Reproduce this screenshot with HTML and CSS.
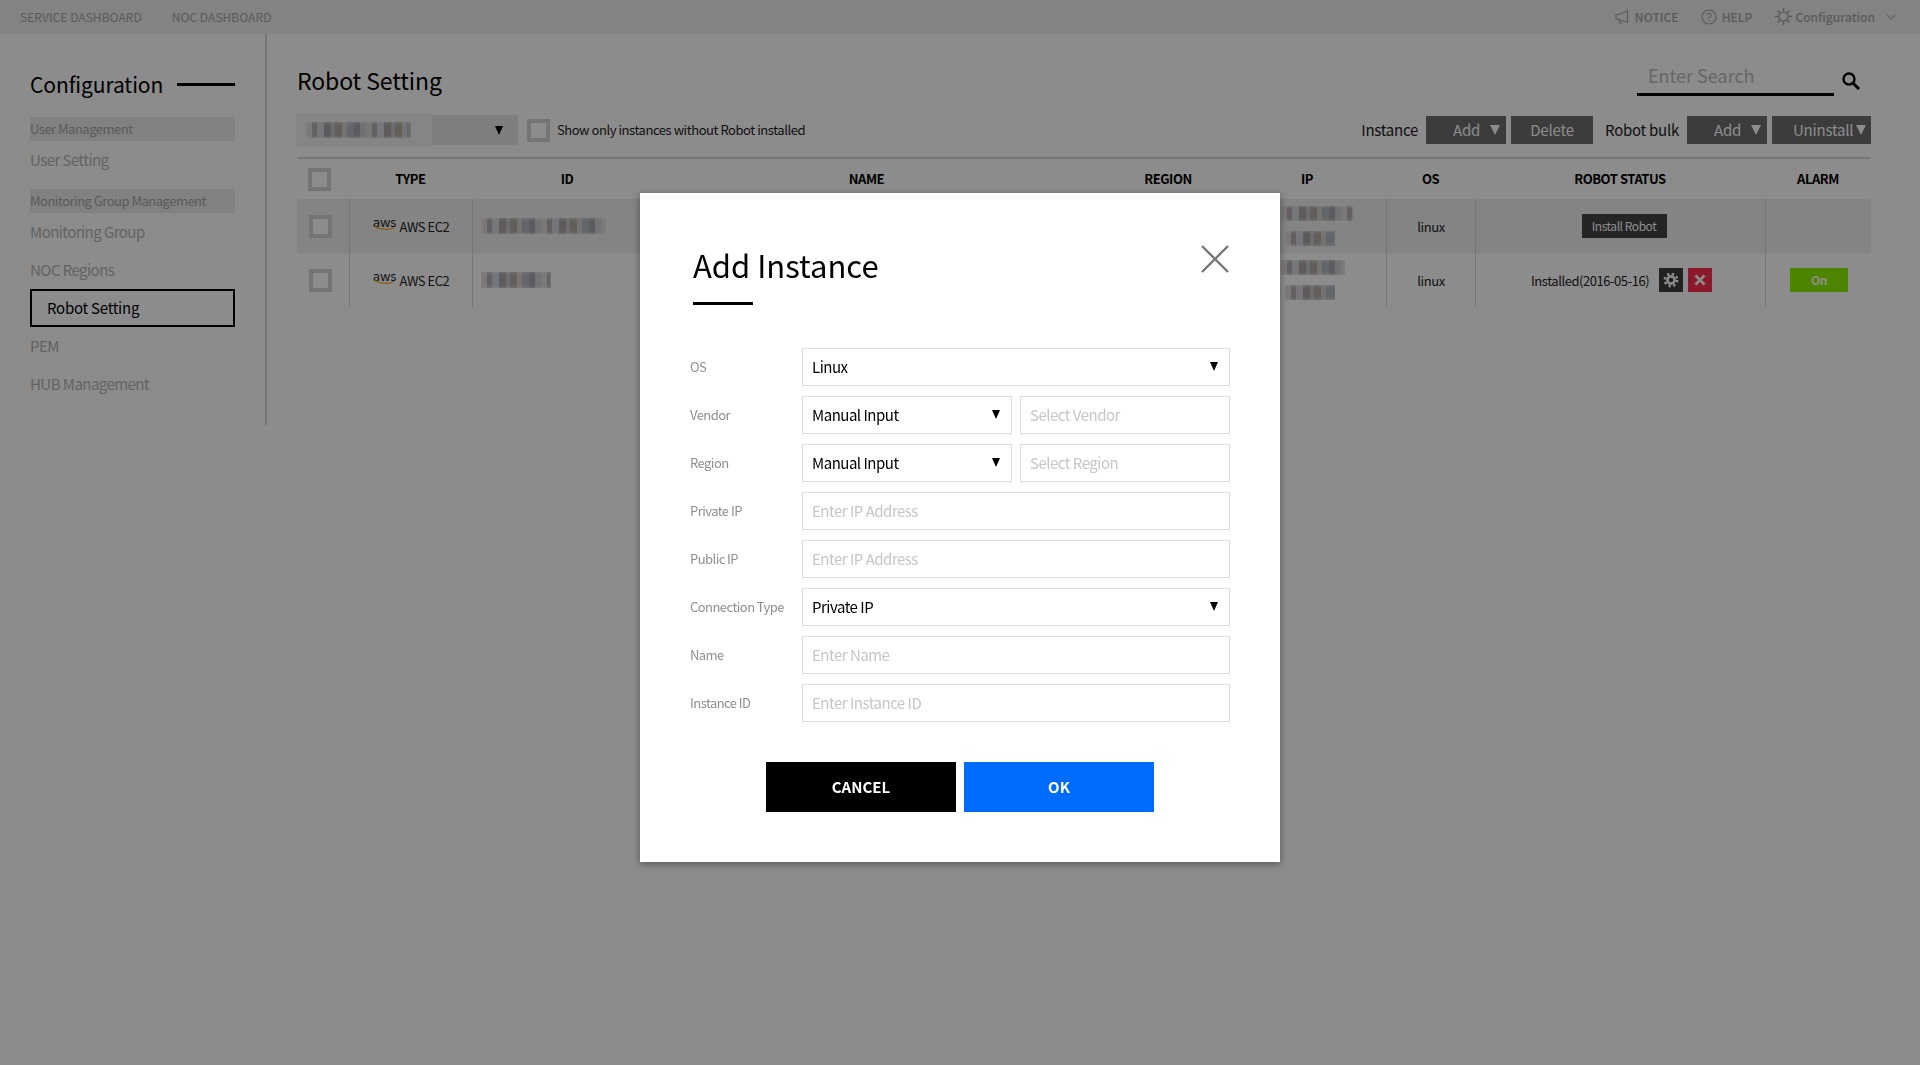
FILE: index.html
```html
<!DOCTYPE html>
<html lang="en">
<head>
  <meta charset="UTF-8" />
  <title>Robot Setting</title>
  <link rel="stylesheet" href="styles.css">
</head>
<body>
  <header class="topbar">
    <nav class="topbar-left">
      <a>SERVICE DASHBOARD</a>
      <a>NOC DASHBOARD</a>
    </nav>
    <div class="topbar-right">
      <svg class="icon-notice" width="14" height="14" viewBox="0 0 14 14" fill="none" stroke="#a5a5a5" stroke-width="1.2"><path d="M12.5 1L3.5 4.5H1V8.5L4 9.5V9.5L12.5 12.5Z"/><path d="M4 9.5L5 13H7.5"/></svg>
      <a class="link-notice">NOTICE</a>
      <svg class="icon-help" width="16" height="16" viewBox="0 0 16 16" fill="none" stroke="#a5a5a5" stroke-width="1.1"><circle cx="8" cy="8" r="7"/><path d="M5.8 6.2C5.8 3.6 10.2 3.6 10.2 6.2C10.2 7.8 8 7.8 8 9.6"/><path d="M8 11V12.2"/></svg>
      <a class="link-help">HELP</a>
      <svg class="icon-config" width="17" height="17" viewBox="0 0 17 17" fill="none" stroke="#a5a5a5" stroke-width="1.5"><circle cx="8.5" cy="8.5" r="4.5"/><path d="M8.5 0V3M8.5 14V17M0 8.5H3M14 8.5H17M2.5 2.5L4.6 4.6M12.4 12.4L14.5 14.5M2.5 14.5L4.6 12.4M12.4 4.6L14.5 2.5"/></svg>
      <a class="link-config">Configuration</a>
      <svg class="icon-chevron" width="10" height="6" viewBox="0 0 10 6" fill="none" stroke="#b5b5b5" stroke-width="1.2"><path d="M1 1L5 5L9 1"/></svg>
    </div>
  </header>

  <div class="main">
    <aside class="sidebar">
      <div class="sidebar-title">
        <h2>Configuration</h2>
        <span class="sidebar-rule"></span>
      </div>
      <div class="group-label">User Management</div>
      <a class="side-link">User Setting</a>
      <div class="group-label group-label-next">Monitoring Group Management</div>
      <a class="side-link">Monitoring Group</a>
      <a class="side-link">NOC Regions</a>
      <a class="side-link side-link-active">Robot Setting</a>
      <a class="side-link">PEM</a>
      <a class="side-link">HUB Management</a>
    </aside>

    <section class="content">
      <div class="title-row">
        <h1>Robot Setting</h1>
        <div class="search">
          <span class="search-box">Enter Search</span>
          <svg class="search-icon" width="18" height="18" viewBox="0 0 18 18" fill="none" stroke="#000"><circle cx="7" cy="7" r="5.5" stroke-width="2.4"/><path d="M11 11L17 17" stroke-width="3"/></svg>
        </div>
      </div>

      <div class="toolbar">
        <div class="dropdown">
          <span class="dropdown-patch"><span class="mosaic mosaic-account"></span></span>
          <span class="arrow arrow-dark"></span>
        </div>
        <span class="checkbox toolbar-check"></span>
        <span class="toolbar-label">Show only instances without Robot installed</span>
        <div class="toolbar-actions">
          <span class="action-label">Instance</span>
          <button class="btn btn-add">Add<span class="arrow"></span></button>
          <button class="btn btn-delete">Delete</button>
          <span class="action-label action-label-next">Robot bulk</span>
          <button class="btn btn-add">Add<span class="arrow"></span></button>
          <button class="btn btn-uninstall">Uninstall<span class="arrow"></span></button>
        </div>
      </div>

      <div class="table">
        <div class="tr tr-head">
          <div class="th"><span class="checkbox"></span></div>
          <div class="th">TYPE</div>
          <div class="th">ID</div>
          <div class="th">NAME</div>
          <div class="th">REGION</div>
          <div class="th th-ip">IP</div>
          <div class="th">OS</div>
          <div class="th">ROBOT STATUS</div>
          <div class="th">ALARM</div>
        </div>

        <div class="tr tr-odd">
          <div class="td"><span class="checkbox"></span></div>
          <div class="td"><span class="aws">aws<svg width="22" height="5" viewBox="0 0 22 5" fill="none" stroke="#ff9d1e" stroke-width="1.3"><path d="M1 0.5C6 4 15 4.5 20 1.5"/></svg></span>AWS EC2</div>
          <div class="td td-left"><span class="mosaic mosaic-id"></span></div>
          <div class="td"></div>
          <div class="td"></div>
          <div class="td td-ip"><span class="mosaic mosaic-ip"></span><span class="mosaic mosaic-ip-sub"></span></div>
          <div class="td">linux</div>
          <div class="td"><button class="btn-install">Install Robot</button></div>
          <div class="td"></div>
        </div>

        <div class="tr">
          <div class="td"><span class="checkbox"></span></div>
          <div class="td"><span class="aws">aws<svg width="22" height="5" viewBox="0 0 22 5" fill="none" stroke="#ff9d1e" stroke-width="1.3"><path d="M1 0.5C6 4 15 4.5 20 1.5"/></svg></span>AWS EC2</div>
          <div class="td td-left"><span class="mosaic mosaic-id-short"></span></div>
          <div class="td"></div>
          <div class="td"></div>
          <div class="td td-ip"><span class="mosaic mosaic-ip mosaic-ip-short"></span><span class="mosaic mosaic-ip-sub"></span></div>
          <div class="td">linux</div>
          <div class="td td-status">
            <span>Installed(2016-05-16)</span>
            <button class="btn-square btn-gear"><svg width="16" height="16" viewBox="0 0 16 16" fill="none" stroke="#fff"><circle cx="8" cy="8" r="3.6" stroke-width="2.6"/><circle cx="8" cy="8" r="6.2" stroke-width="2.4" stroke-dasharray="2.4 2.47"/></svg></button>
            <button class="btn-square btn-remove"><svg width="12" height="12" viewBox="0 0 12 12" fill="none" stroke="#fff" stroke-width="2.6"><path d="M1.5 1.5L10.5 10.5M10.5 1.5L1.5 10.5"/></svg></button>
          </div>
          <div class="td"><button class="btn-on">On</button></div>
        </div>
      </div>
    </section>
  </div>

  <div class="overlay">
    <div class="modal">
      <div class="modal-head">
        <h2>Add Instance</h2>
        <svg class="modal-close" width="28" height="28" viewBox="0 0 28 28" fill="none" stroke="#777" stroke-width="2.4"><path d="M1 1L27 27M27 1L1 27"/></svg>
      </div>
      <form class="modal-form">
        <label>OS</label>
        <div class="select"><select><option>Linux</option></select></div>

        <label>Vendor</label>
        <div class="field-pair">
          <div class="select"><select><option>Manual Input</option></select></div>
          <input type="text" placeholder="Select Vendor" />
        </div>

        <label>Region</label>
        <div class="field-pair">
          <div class="select"><select><option>Manual Input</option></select></div>
          <input type="text" placeholder="Select Region" />
        </div>

        <label>Private IP</label>
        <input type="text" placeholder="Enter IP Address" />

        <label>Public IP</label>
        <input type="text" placeholder="Enter IP Address" />

        <label>Connection Type</label>
        <div class="select"><select><option>Private IP</option></select></div>

        <label>Name</label>
        <input type="text" placeholder="Enter Name" />

        <label>Instance ID</label>
        <input type="text" placeholder="Enter Instance ID" />
      </form>
      <div class="modal-buttons">
        <button class="btn-cancel">CANCEL</button>
        <button class="btn-ok">OK</button>
      </div>
    </div>
  </div>
</body>
</html>
```

FILE: styles.css
```css
* {
  box-sizing: border-box;
}

body {
  margin: 0;
  height: 1065px;
  overflow: hidden;
  background-color: #fff;
  color: #1c1c1c;
  font-family: "Noto Sans CJK KR", "Noto Sans", sans-serif;
  font-size: 13px;
  letter-spacing: -0.45px;
}

h1, h2 {
  margin: 0;
  font-weight: 400;
}

button {
  border: none;
  padding: 0;
  font-family: inherit;
  letter-spacing: inherit;
  color: #fff;
}

/* top bar */
.topbar {
  height: 34px;
  padding-bottom: 1px;
  background-color: #eee;
  display: flex;
  align-items: center;
  justify-content: space-between;
  font-size: 12px;
  color: #a5a5a5;
  letter-spacing: 0.05px;
}

.topbar-left {
  padding-left: 20px;
  display: flex;
  gap: 30px;
}

.topbar-right {
  display: flex;
  align-items: center;
  padding-right: 24px;
  font-weight: 500;
}

.icon-notice {
  margin-right: 6px;
}

.link-notice {
  margin-right: 22px;
}

.icon-help {
  margin-right: 5px;
}

.link-help {
  margin-right: 23px;
}

.icon-config {
  margin-right: 3px;
}

.link-config {
  margin-right: 11px;
}

/* sidebar */
.main {
  display: flex;
}

.sidebar {
  width: 267px;
  height: 391px;
  padding: 34px 30px 0;
  border-right: 2px solid #d6d6d6;
  color: #b4b4b4;
  font-size: 15px;
  letter-spacing: -0.55px;
}

.sidebar-title {
  display: flex;
  align-items: center;
  justify-content: space-between;
  height: 34px;
  margin-bottom: 15px;
}

.sidebar-title h2 {
  font-size: 21px;
  line-height: 32px;
  margin-top: -2px;
  color: #000;
  letter-spacing: -0.1px;
}

.sidebar-rule {
  width: 58px;
  height: 3px;
  margin-top: -2px;
  background-color: #000;
}

.group-label {
  height: 24px;
  line-height: 24px;
  font-size: 13px;
  color: #a6a6a6;
  background-color: #ebebeb;
  margin-bottom: 1px;
  letter-spacing: -0.5px;
}

.group-label-next {
  margin-top: 9px;
}

.side-link {
  display: block;
  height: 38px;
  line-height: 36px;
}

.side-link-active {
  margin: -1px 0 1px;
  padding-left: 15px;
  line-height: 33px;
  border: 2px solid #000;
  color: #000;
  letter-spacing: -0.25px;
}

/* content */
.content {
  width: 1653px;
  padding: 30px 49px 0 30px;
}

.title-row {
  display: flex;
  justify-content: space-between;
  height: 34px;
  margin-bottom: 17px;
}

.title-row h1 {
  font-size: 23px;
  line-height: 32px;
  color: #000;
  letter-spacing: -0.1px;
}

.search {
  display: flex;
  align-items: flex-start;
}

.search-box {
  width: 197px;
  height: 32px;
  padding-left: 11px;
  line-height: 22px;
  font-size: 18px;
  color: #bbb;
  border-bottom: 3px solid #000;
  letter-spacing: 0;
}

.search-icon {
  margin: 8px 11px 0 8px;
}

.toolbar {
  display: flex;
  align-items: center;
  height: 30px;
  margin-left: -1px;
  margin-bottom: 12px;
}

.dropdown {
  width: 222px;
  height: 30px;
  background-color: #e7e7e7;
  display: flex;
  align-items: center;
}

.dropdown-patch {
  display: flex;
  align-items: center;
  width: 136px;
  height: 34px;
  margin: -2px 0;
  padding-left: 10px;
  background-color: #f2f2f2;
}

.dropdown .arrow {
  margin-left: 63px;
}

.checkbox {
  display: block;
  width: 23px;
  height: 23px;
  border: 4px solid #d4d4d4;
  background-color: #fff;
}

.toolbar-check {
  margin-left: 9px;
}

.toolbar-label {
  margin-left: 7px;
  padding-bottom: 2px;
  color: #1c1c1c;
}

.toolbar-actions {
  margin-left: auto;
  display: flex;
  align-items: center;
}

.action-label {
  font-size: 15px;
  margin-right: 8px;
  padding-bottom: 2px;
  letter-spacing: -0.25px;
}

.action-label-next {
  margin-left: 12px;
  margin-right: 8px;
}

.btn {
  height: 28px;
  padding-bottom: 1px;
  display: flex;
  align-items: center;
  background-color: #6d6d6d;
  font-size: 15px;
  letter-spacing: -0.2px;
}

.btn-add {
  width: 80px;
  padding-left: 27px;
  margin-right: 5px;
}

.btn-delete {
  width: 82px;
  justify-content: center;
}

.btn-uninstall {
  width: 99px;
  padding-left: 21px;
}

.arrow {
  width: 0;
  height: 0;
  margin-left: 10px;
  border-left: 5px solid transparent;
  border-right: 5px solid transparent;
  border-top: 10px solid #fff;
}

.btn-uninstall .arrow {
  margin-left: 3px;
}

.arrow-dark {
  border-left-width: 4.5px;
  border-right-width: 4.5px;
  border-top: 9px solid #000;
}

/* table */
.table {
  border-top: 2px solid #d6d6d6;
}

.tr {
  display: grid;
  grid-template-columns: 52px 123px 190px 409px 194px 121px 89px 290px 106px;
  height: 54px;
}

.tr-head {
  height: 40px;
}

.tr-odd {
  background-color: #f0f0f0;
}

.th {
  display: flex;
  align-items: center;
  justify-content: center;
  padding-bottom: 2px;
  font-weight: 700;
  font-size: 13px;
  color: #000;
}

.th:first-child {
  justify-content: flex-start;
  padding-left: 11px;
  padding-bottom: 0;
}

.th-ip {
  padding-right: 37px;
}

.td {
  display: flex;
  align-items: center;
  justify-content: center;
  border-left: 1px solid #d6d6d6;
}

.td:first-child {
  border-left: none;
  justify-content: flex-start;
  padding-left: 12px;
}

.td-left {
  justify-content: flex-start;
  padding-left: 8px;
}

.td-ip {
  flex-direction: column;
  align-items: flex-start;
  gap: 10px;
  padding-left: 15px;
}

.td-status {
  justify-content: flex-start;
  padding-left: 55px;
}

.aws {
  display: flex;
  flex-direction: column;
  align-items: center;
  margin-right: 3px;
  font-size: 13px;
  line-height: 10px;
  height: 18px;
  color: #222;
  letter-spacing: 0;
}

.aws svg {
  margin-top: -1px;
}

.mosaic {
  display: block;
  height: 16px;
  background-image: repeating-linear-gradient(90deg, #dedad9 0 6px, #b6afb1 6px 11px, #d3d8dc 11px 18px, #aca5a8 18px 25px, #c4c5c8 25px 29px, #b3ada7 29px 36px, #d6d1cc 36px 41px, #b3b9c2 41px 48px, #a8a5a8 48px 54px, #ccced1 54px 60px);
  box-shadow: inset 0 0 3px 1px rgba(240, 240, 240, 0.6);
}

.mosaic-account {
  width: 105px;
}

.mosaic-id {
  width: 125px;
}

.mosaic-id-short {
  width: 70px;
}

.mosaic-ip {
  width: 73px;
  height: 15px;
}

.mosaic-ip-short {
  width: 64px;
}

.mosaic-ip-sub {
  width: 50px;
  height: 15px;
  margin-left: 4px;
}

.btn-install {
  width: 85px;
  height: 24px;
  margin-left: 7px;
  padding-bottom: 2px;
  background-color: #444;
  font-size: 12px;
}

.btn-square {
  width: 24px;
  height: 24px;
  display: flex;
  align-items: center;
  justify-content: center;
}

.btn-gear {
  margin-left: 10px;
  background-color: #3c3c3c;
}

.btn-remove {
  margin-left: 5px;
  background-color: #ff3050;
}

.btn-on {
  width: 58px;
  height: 24px;
  margin-left: 1px;
  padding-bottom: 2px;
  background-color: #8cf000;
  font-size: 12px;
  font-weight: 700;
}

/* dialog */
.overlay {
  position: fixed;
  top: 0;
  left: 0;
  right: 0;
  bottom: 0;
  padding-top: 193px;
  background-color: rgba(0, 0, 0, 0.45);
}

.modal {
  width: 640px;
  height: 669px;
  margin: 0 auto;
  padding: 50px 50px 0;
  background-color: #fff;
  box-shadow: 0 2px 8px rgba(0, 0, 0, 0.4);
}

.modal-head {
  display: flex;
  justify-content: space-between;
  align-items: flex-start;
  height: 62px;
  margin-left: 3px;
  position: relative;
}

.modal-head::after {
  content: "";
  position: absolute;
  left: 0;
  bottom: 0;
  width: 60px;
  height: 3px;
  background-color: #000;
}

.modal-head h2 {
  font-size: 31px;
  line-height: 44px;
  color: #000;
  letter-spacing: 0;
}

.modal-close {
  margin-top: 2px;
  margin-right: 1px;
}

.modal-form {
  margin-top: 43px;
  display: grid;
  grid-template-columns: 112px 428px;
  row-gap: 10px;
  align-items: center;
}

.modal-form label {
  padding-bottom: 2px;
  font-size: 13px;
  color: #8e8e8e;
  letter-spacing: -0.55px;
}

.modal-form input,
.modal-form select {
  display: block;
  width: 100%;
  height: 38px;
  padding: 0 9px 2px;
  border: 1px solid #ddd;
  border-radius: 0;
  background-color: #fff;
  font-family: inherit;
  font-size: 15px;
  color: #000;
  outline: none;
  appearance: none;
  letter-spacing: -0.5px;
}

.modal-form input::placeholder {
  color: #c6c6c6;
}

.select {
  position: relative;
}

.select::after {
  content: "";
  position: absolute;
  top: 14px;
  right: 12px;
  border-left: 4.5px solid transparent;
  border-right: 4.5px solid transparent;
  border-top: 9px solid #000;
}

.field-pair {
  display: grid;
  grid-template-columns: 210px 210px;
  gap: 8px;
}

.modal-buttons {
  margin-top: 40px;
  display: flex;
  justify-content: center;
  gap: 8px;
}

.modal-buttons button {
  width: 190px;
  height: 50px;
  padding-bottom: 2px;
  font-size: 15px;
  font-weight: 700;
  letter-spacing: 0;
}

.btn-cancel {
  background-color: #000;
}

.btn-ok {
  background-color: #006cff;
}
```
